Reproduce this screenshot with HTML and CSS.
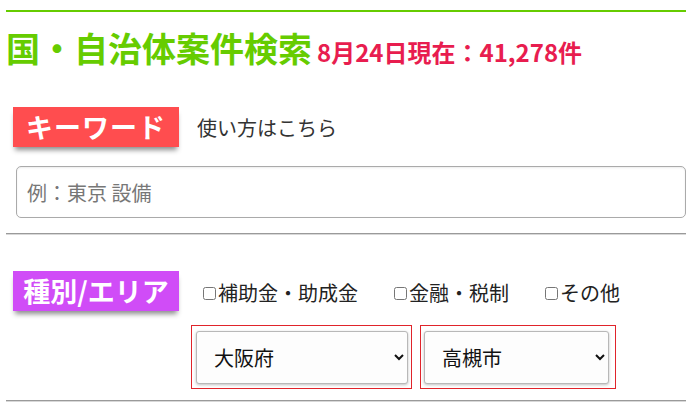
FILE: index.html
```html
<!DOCTYPE html>
<html lang="ja">
<head>
<meta charset="utf-8">
<link rel="stylesheet" href="styles.css">
</head>
<body>
<div class="page">
  <div class="topline"></div>
  <h1 class="title">国・自治体案件検索<span class="count">8月24日現在：41,278件</span></h1>

  <div class="row keyword-row">
    <div class="label label-red">キーワード</div>
    <a class="howto">使い方はこちら</a>
  </div>
  <input class="search" type="text" placeholder="例：東京 設備">

  <hr class="rule">

  <div class="area-grid">
    <div class="label label-purple">種別/エリア</div>
    <div class="area-body">
      <div class="checks">
        <label class="check"><input type="checkbox">補助金・助成金</label>
        <label class="check"><input type="checkbox">金融・税制</label>
        <label class="check"><input type="checkbox">その他</label>
      </div>
      <div class="selects">
        <div class="sel-wrap wrap-pref">
          <select class="sel sel-pref"><option>大阪府</option></select>
        </div>
        <div class="sel-wrap wrap-city">
          <select class="sel sel-city"><option>高槻市</option></select>
        </div>
      </div>
    </div>
  </div>

  <hr class="rule rule-bottom">
</div>
</body>
</html>
```

FILE: styles.css
```css
* { box-sizing: border-box; }
html, body { margin: 0; padding: 0; background: #fff; }
body {
  font-family: "Noto Sans CJK JP", "Noto Sans", sans-serif;
  color: #333;
}
.page {
  width: 680px;
  margin-left: 6px;
  padding-top: 10px;
}
.topline {
  height: 2px;
  background: #66cc00;
}
.title {
  margin: 14px 0 0 0;
  font-size: 34px;
  line-height: 44px;
  font-weight: 700;
  color: #66cc00;
  white-space: nowrap;
}
.count {
  margin-left: 5px;
  font-size: 24px;
  color: #e81d4f;
}
.row {
  display: flex;
  align-items: center;
}
.keyword-row {
  margin-top: 33px;
  margin-left: 7px;
}
.label {
  width: 166px;
  height: 40px;
  line-height: 40px;
  text-align: center;
  color: #fff;
  font-size: 27px;
  font-weight: 700;
  letter-spacing: 1px;
  box-shadow: 0 5px 5px -2px rgba(0,0,0,0.45);
  flex: none;
}
.label-red { background: #ff4d4f; }
.label-purple { background: #d04cf7; letter-spacing: 0; }
.howto {
  margin-left: 18px;
  font-size: 20px;
  color: #333;
}
.search {
  display: block;
  margin: 19px 0 0 10px;
  width: 670px;
  height: 52px;
  border: 1px solid #aaa;
  border-radius: 5px;
  box-shadow: inset 0 1px 2px rgba(0,0,0,0.08);
  padding: 0 10px;
  font-family: inherit;
  font-size: 20px;
  color: #333;
  outline: none;
}
.search::placeholder { color: #777; }
.rule {
  margin: 15px 0 0 0;
  border: 0;
  border-top: 1px solid #9a9a9a;
  border-bottom: 1px solid #d8d8d8;
  height: 0;
}
.area-grid {
  display: grid;
  grid-template-columns: 185px 1fr;
  margin-top: 36px;
}
.label-purple { margin-left: 7px; }
.area-body {
  display: flex;
  flex-direction: column;
}
.checks {
  display: flex;
  gap: 32px;
  padding-left: 8px;
  padding-top: 8px;
  font-size: 20px;
  line-height: 28px;
  color: #222;
}
.check {
  display: flex;
  align-items: center;
}
.check input {
  width: 13px;
  height: 13px;
  margin: 0 2px 0 4px;
}
.selects {
  display: flex;
  gap: 8px;
  margin-top: 18px;
}
.sel-wrap {
  border: 1px solid #e0242b;
  height: 64px;
  padding: 5px 3px 4px 4px;
  display: flex;
}
.wrap-pref { width: 221px; }
.wrap-city { width: 196px; padding: 5px 6px 4px 3px; }
.sel {
  width: 100%;
  height: 53px;
  border: 1px solid #b8b8b8;
  border-radius: 3px;
  background: #fdfdfd;
  box-shadow: 0 1px 3px rgba(0,0,0,0.25);
  font-family: inherit;
  font-size: 20px;
  color: #111;
  padding: 0 8px 0 13px;
}
.rule-bottom { margin-top: 11px; }
```
